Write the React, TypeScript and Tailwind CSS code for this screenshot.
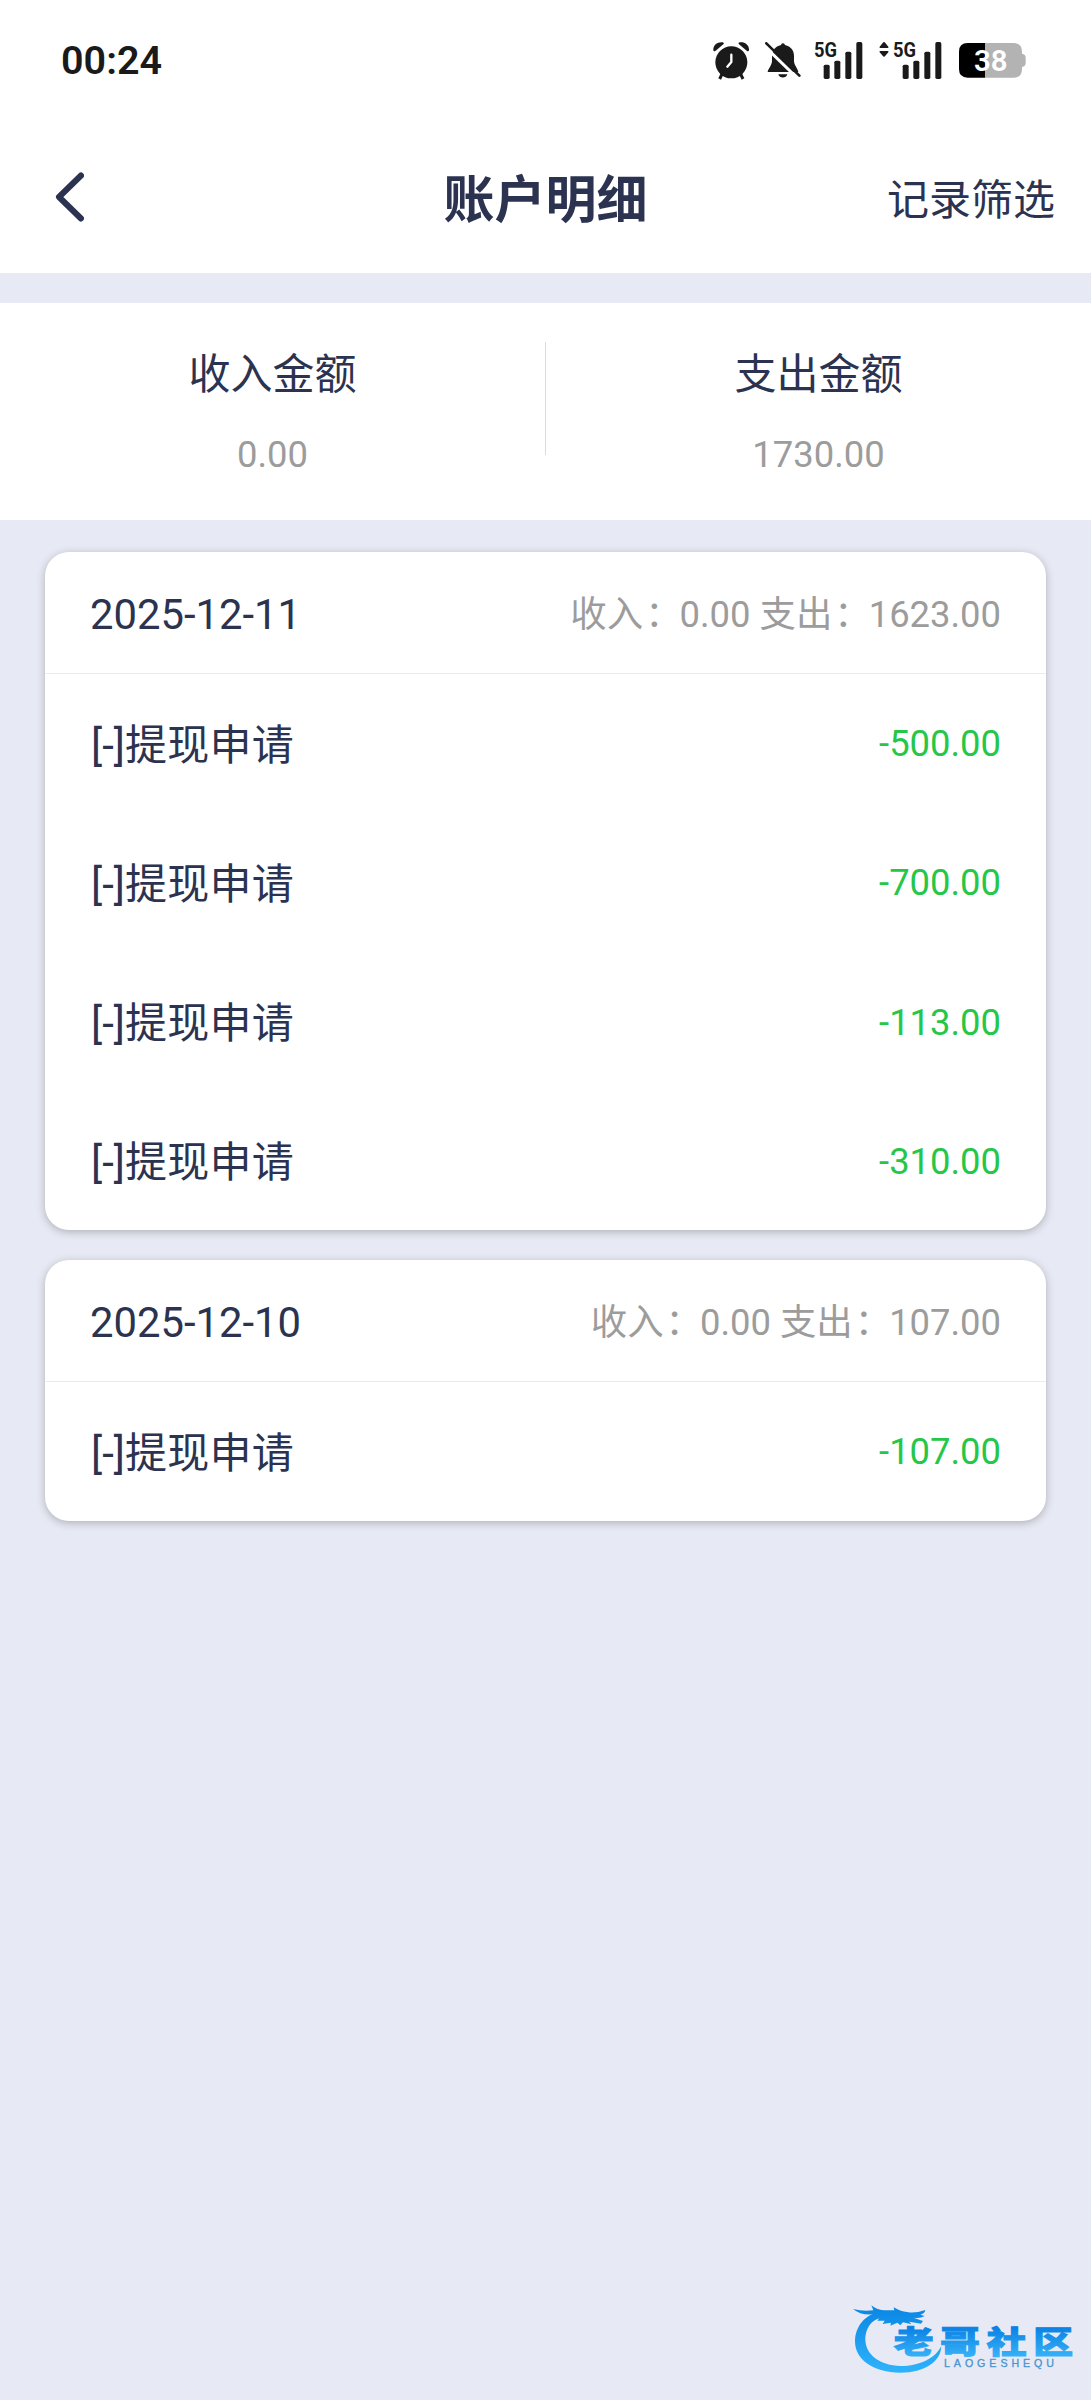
type Entry = { name: string; amount: string };
type Day = { date: string; income: string; expense: string; entries: Entry[] };

const days: Day[] = [
  {
    date: "2025-12-11",
    income: "0.00",
    expense: "1623.00",
    entries: [
      { name: "提现申请", amount: "-500.00" },
      { name: "提现申请", amount: "-700.00" },
      { name: "提现申请", amount: "-113.00" },
      { name: "提现申请", amount: "-310.00" },
    ],
  },
  {
    date: "2025-12-10",
    income: "0.00",
    expense: "107.00",
    entries: [{ name: "提现申请", amount: "-107.00" }],
  },
];

const AlarmIcon = () => (
  <svg className="w-9 h-[38px]" viewBox="0 0 108 114" fill="none">
    <path d="M28 94l-8 17M82 94l8 17" stroke="#1a1a1a" strokeWidth="9" />
    <circle cx="55" cy="61" r="48" fill="#1a1a1a" />
    <path d="M1 25C0 9 13-1 29 1Q35 3 31 7L7 27Q2 29 1 25zM108 25C109 9 96-1 80 1Q74 3 78 7L102 27Q107 29 108 25z" fill="#1a1a1a" />
    <path d="M55 38v22L43 74" stroke="#fff" strokeWidth="7" strokeLinecap="round" strokeLinejoin="round" />
  </svg>
);

const MutedIcon = () => (
  <svg className="w-9 h-[38px]" viewBox="0 0 108 114" fill="none">
    <path d="M54 4c4 0 5 3 6 5 18 4 27 17 27 34v14c0 12 11 22 13 33H8c1-9 13-20 13-33V43c0-17 9-30 27-34 1-2 2-5 6-5z" fill="#1a1a1a" />
    <path d="M40 97h27c-3 13-24 13-27 0z" fill="#1a1a1a" />
    <path d="M-3 11l106 103" stroke="#fff" strokeWidth="9" />
    <path d="M4 4l99 97" stroke="#1a1a1a" strokeWidth="8" strokeLinecap="round" />
  </svg>
);

const SignalIcon = () => (
  <svg className="w-[49px] h-[38px] overflow-visible" viewBox="0 0 147 114">
    <text
      x="0"
      y="46"
      fontSize="62"
      fontWeight="700"
      textLength="69"
      lengthAdjust="spacingAndGlyphs"
      fill="#1a1a1a"
    >
      5G
    </text>
    <g fill="#1a1a1a">
      <rect x="29" y="68" width="18" height="43" rx="5" />
      <rect x="61" y="56" width="18" height="55" rx="5" />
      <rect x="94" y="29" width="18" height="82" rx="5" />
      <rect x="127" y="0" width="18" height="111" rx="5" />
    </g>
  </svg>
);

const DataArrows = () => (
  <svg className="w-[10px] h-[38px] mr-1" viewBox="0 0 30 114" fill="#1a1a1a">
    <path d="M15 0q2 0 4 3l9 11q2 4-2 4H4q-4 0-2-4l9-11q2-3 4-3zM15 44q2 0 4-3l9-10q2-4-2-4H4q-4 0-2 4l9 10q2 3 4 3z" />
  </svg>
);

const BatteryIcon = () => (
  <svg className="w-[67px] h-[35px]" viewBox="0 0 201 105">
    <path d="M78 0H163Q189 0 189 26V32Q200 34 200 44V60Q200 70 189 72V78Q189 104 163 104H78z" fill="#b3b3b3" />
    <path d="M78 0H26Q0 0 0 26V78Q0 104 26 104H78z" fill="#000" />
    <text x="95" y="84" fontSize="88" fontWeight="600" textAnchor="middle" fill="#fff">
      38
    </text>
  </svg>
);

const StatusBar = () => (
  <div className="h-[121px] flex items-center justify-between pl-[61px] pr-[66px]">
    <span className="text-[39.5px] leading-none font-semibold text-[#1a1a1a]">00:24</span>
    <div className="flex items-center">
      <AlarmIcon />
      <div className="ml-4 flex">
        <MutedIcon />
      </div>
      <div className="ml-[13px] flex">
        <SignalIcon />
      </div>
      <div className="ml-4 flex">
        <DataArrows />
        <SignalIcon />
      </div>
      <div className="ml-[17px] mr-[-1px] flex">
        <BatteryIcon />
      </div>
    </div>
  </div>
);

const Header = () => (
  <header className="h-[152px] grid grid-cols-3 items-center pl-[55px] pr-9">
    <button className="w-fit">
      <svg className="w-[29px] h-[50px]" viewBox="0 0 29 50" fill="none">
        <path
          d="M26 3.5L4 25l22 21.5"
          stroke="#2b3350"
          strokeWidth="6"
          strokeLinecap="round"
          strokeLinejoin="round"
        />
      </svg>
    </button>
    <h1 className="pt-[7px] text-[51px] leading-none font-bold text-center whitespace-nowrap -ml-[19px]">账户明细</h1>
    <button className="pt-[7px] text-[42px] leading-none text-right">记录筛选</button>
  </header>
);

const Total = ({ label, value }: { label: string; value: string }) => (
  <div className="flex-1 flex flex-col items-center pt-[51px]">
    <p className="text-[42px] leading-[42px]">{label}</p>
    <p className="mt-[41px] text-[36.4px] leading-[36px] text-[#9c9c9c]">{value}</p>
  </div>
);

const Colon = () => <span className="pl-0.5 -mr-0.5">：</span>;

const DayCard = ({ day }: { day: Day }) => (
  <section className="bg-white rounded-[24px] shadow-[0_2px_8px_rgba(0,0,0,0.25)]">
    <div className="h-[122px] pt-[5px] px-[45px] flex items-center justify-between border-b border-[#ececee]">
      <h2 className="text-[41.8px] leading-none">{day.date}</h2>
      <p className="text-[36.4px] leading-none text-[#9c9c9c]">
        收入
        <Colon />
        {day.income} 支出
        <Colon />
        {day.expense}
      </p>
    </div>
    <ul>
      {day.entries.map((entry, i) => (
        <li key={i} className="h-[139.1px] pl-[46px] pr-[45px] flex items-center justify-between">
          <span className="pt-[5px] text-[42px] leading-none">
            [-]<span className="tracking-[0.3px]">{entry.name}</span>
          </span>
          <span className="pt-0.5 text-[36.4px] leading-none text-[#25c748]">{entry.amount}</span>
        </li>
      ))}
    </ul>
  </section>
);

const Watermark = () => (
  <svg className="absolute right-0 bottom-0 w-[260px] h-[120px]" viewBox="0 0 780 360">
    <defs>
      <linearGradient id="blue" x1="0" y1="80" x2="0" y2="280" gradientUnits="userSpaceOnUse">
        <stop offset="0" stopColor="#0a86e4" />
        <stop offset="1" stopColor="#2fb4fb" />
      </linearGradient>
      <linearGradient id="word" x1="0" y1="-78" x2="0" y2="8" gradientUnits="userSpaceOnUse">
        <stop offset="0" stopColor="#0a80e4" />
        <stop offset="1" stopColor="#35b0f6" />
      </linearGradient>
    </defs>
    {/* dragon */}
    <g fill="url(#blue)">
      <path d="M160 112C118 116 103 150 103 180C105 226 148 256 208 258C268 258 314 234 331 198C330 244 282 278 208 278C128 277 72 240 72 184C73 138 102 106 142 96z" />
      <path d="M66 87Q96 95 127 91L121 76Q137 89 158 91L190 91L188 82Q207 94 229 96Q250 101 283 90Q281 101 268 104L281 108Q268 116 247 113L276 123L270 131L235 125L241 133L216 127L208 136L199 128L178 137L180 128L155 132L161 122L139 122L149 108L118 119L127 103Q90 107 66 87z" />
    </g>
    <g
      fill="url(#word)"
      stroke="url(#word)"
      strokeWidth="3"
      fontFamily="'Noto Sans CJK SC', sans-serif"
      fontWeight="900"
      fontSize="92"
      transform="translate(188 219) scale(1.3 1)"
    >
      <text x="0 107 215 322" y="0">老哥社区</text>
    </g>
    <text
      x="339"
      y="260"
      fontSize="32"
      textLength="330"
      fill="#4b95d2"
      stroke="#4b95d2"
      strokeWidth="1"
      fontFamily="'Liberation Sans', sans-serif"
    >
      LAOGESHEQU
    </text>
  </svg>
);

const App = () => {
  return (
    <div className="relative h-[2400px] w-full bg-[#e7eaf4] text-[#2b3350] font-[Roboto,'Noto_Sans_CJK_SC',sans-serif]">
      <div className="bg-white">
        <StatusBar />
        <Header />
      </div>
      <div className="mt-[30px] h-[217px] bg-white flex">
        <Total label="收入金额" value="0.00" />
        <div className="mt-[39px] w-px h-[113px] bg-[#dcdcde]" />
        <Total label="支出金额" value="1730.00" />
      </div>
      <main className="px-[45px] pt-8 flex flex-col gap-[29.5px]">
        {days.map((day) => (
          <DayCard key={day.date} day={day} />
        ))}
      </main>
      <Watermark />
    </div>
  );
};

export default App;
